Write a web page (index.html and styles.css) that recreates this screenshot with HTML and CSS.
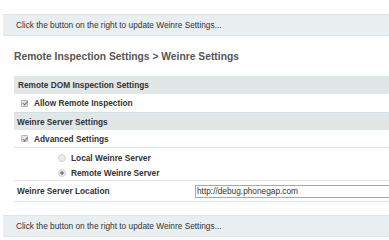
FILE: index.html
```html
<!DOCTYPE html>
<html lang="en">
<head>
  <meta charset="UTF-8">
  <title>Weinre Settings</title>
  <link rel="stylesheet" href="styles.css">
</head>
<body>

<div class="notice">Click the button on the right to update Weinre Settings...</div>

<h2 class="crumbs">Remote Inspection Settings &gt; Weinre Settings</h2>

<div class="settings">
  <div class="section">Remote DOM Inspection Settings</div>
  <div class="row">
    <span class="check"></span>
    <span>Allow Remote Inspection</span>
  </div>

  <div class="section second">Weinre Server Settings</div>
  <div class="row ruled">
    <span class="check"></span>
    <span>Advanced Settings</span>
  </div>

  <div class="choices">
    <div class="choice">
      <span class="radio"></span>
      <span>Local Weinre Server</span>
    </div>
    <div class="choice">
      <span class="radio on"></span>
      <span>Remote Weinre Server</span>
    </div>
  </div>

  <div class="field">
    <label for="location">Weinre Server Location</label>
    <input type="text" id="location" value="http://debug.phonegap.com">
  </div>
</div>

<div class="notice bottom">Click the button on the right to update Weinre Settings...</div>

</body>
</html>
```

FILE: styles.css
```css
body {
  font-family: 'Liberation Sans', Arial, sans-serif;
  background-color: #fff;
  margin: 0;
  padding: 0;
  width: 389px;
  height: 240px;
  overflow: hidden;
  color: #333;
}

.notice {
  margin: 14px 0 0 3px;
  height: 20px;
  line-height: 20px;
  padding-left: 13px;
  background-color: #e9eef0;
  border-top: 1px solid #dde5e8;
  border-bottom: 1px solid #dde5e8;
  font-size: 8.3px;
  color: #333;
}

.notice.bottom {
  margin-top: 13px;
}

.crumbs {
  margin: 13px 0 0 14px;
  height: 16px;
  line-height: 16px;
  font-size: 10.3px;
  font-weight: bold;
  color: #555;
}

.settings {
  margin: 11px 0 0 14px;
  font-size: 8.3px;
  font-weight: bold;
}

.section {
  height: 18px;
  line-height: 18px;
  padding-left: 4px;
  background-color: #e1e6e6;
}

.section.second {
  height: 17px;
  padding-left: 3px;
  border-top: 1px solid #cfdfe4;
}

.row {
  display: flex;
  align-items: center;
  gap: 6px;
  height: 18px;
  padding-left: 7px;
}

.row.ruled {
  height: 17px;
  border-bottom: 1px solid #d3e6ea;
}

.check {
  position: relative;
  width: 5px;
  height: 5px;
  border: 1px solid #b5b5b5;
  border-radius: 1px;
  background-color: #e6e6e6;
}

.check::after {
  content: "";
  position: absolute;
  left: 1.5px;
  top: -0.5px;
  width: 1.5px;
  height: 3.5px;
  border: solid #6f6f6f;
  border-width: 0 1.3px 1.3px 0;
  transform: rotate(40deg);
}

.choices {
  display: flex;
  flex-direction: column;
  padding: 2px 0 0 44px;
  border-bottom: 1px solid #e6e6e6;
}

.choice {
  display: flex;
  align-items: center;
  gap: 5px;
  height: 15px;
}

.radio {
  width: 6px;
  height: 6px;
  border: 1px solid #d0d0d0;
  border-radius: 50%;
  background-color: #ededed;
}

.radio.on {
  background: radial-gradient(circle, #7a7a7a 0 1.4px, #ededed 1.9px);
}

.field {
  display: flex;
  align-items: center;
  height: 20px;
  padding-left: 3px;
  border-bottom: 1px solid #d3e6ea;
}

.field label {
  width: 178px;
}

.field input {
  flex: 1;
  height: 13px;
  box-sizing: border-box;
  padding: 0 1px;
  border: 1px solid #a9a9a9;
  border-right: none;
  font-family: 'Liberation Sans', Arial, sans-serif;
  font-size: 8.3px;
  color: #333;
  outline: none;
}
```
